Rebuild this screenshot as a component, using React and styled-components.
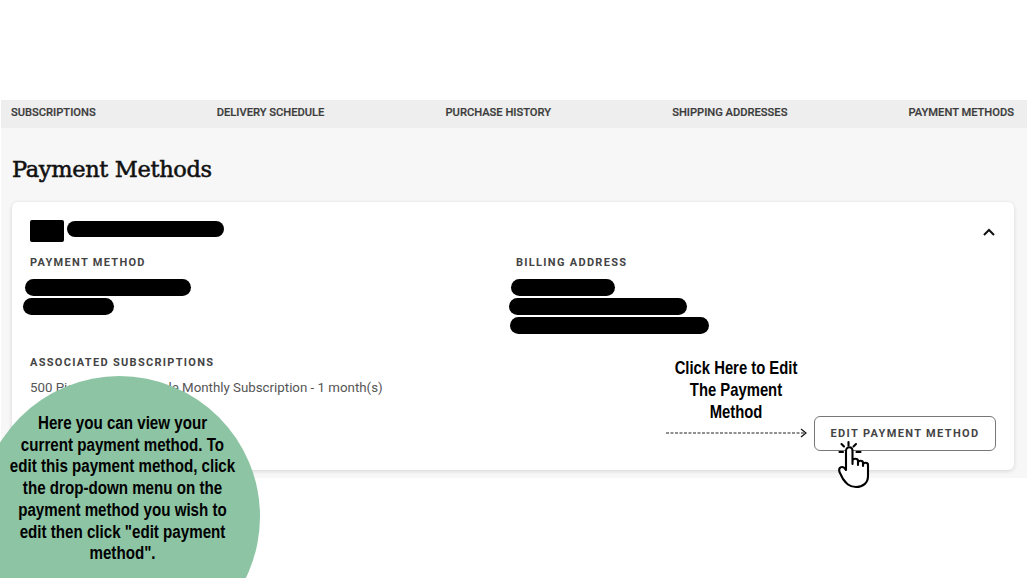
import React from 'react';
import styled, { createGlobalStyle } from 'styled-components';

const GlobalStyle = createGlobalStyle`
  html, body {
    margin: 0;
    padding: 0;
    background: #fff;
    overflow: hidden;
  }
  * {
    box-sizing: border-box;
  }
`;

const Page = styled.div`
  position: relative;
  width: 1028px;
  height: 578px;
  padding: 100px 1px 0;
  overflow: hidden;
  font-family: Roboto, 'Liberation Sans', sans-serif;
`;

const Nav = styled.nav`
  display: flex;
  align-items: center;
  justify-content: space-between;
  height: 28px;
  padding: 0 13px 4px 10px;
  background: #eeeeee;
`;

const NavItem = styled.a`
  font-size: 11.15px;
  font-weight: 500;
  color: #3c3c3c;
  text-transform: uppercase;
  -webkit-text-stroke: 0.2px #3c3c3c;
`;

const Panel = styled.main`
  height: 350px;
  padding: 25px 13px 0 11px;
  background: #f7f7f7;
`;

const Title = styled.h1`
  margin: 0 0 17px;
  font-family: 'DejaVu Serif', 'Liberation Serif', serif;
  font-size: 22.5px;
  line-height: 32px;
  font-weight: 400;
  letter-spacing: -0.35px;
  color: #111;
  -webkit-text-stroke: 0.55px #111;
`;

const Card = styled.section`
  display: flex;
  flex-direction: column;
  height: 268px;
  padding: 18px 18px 19px 18px;
  background: #fff;
  border-radius: 6px;
  box-shadow: 0 1px 4px rgba(0, 0, 0, 0.14);
`;

const CardHeader = styled.header`
  display: flex;
  align-items: flex-start;
  height: 22px;
`;

const CardLogo = styled.div`
  width: 34px;
  height: 22px;
  background: #000;
  border-radius: 2px;
`;

const Chevron = styled.svg`
  width: 14px;
  height: 10px;
  margin: 7px 0 0 auto;
`;

const Columns = styled.div`
  display: grid;
  grid-template-columns: 486px 1fr;
  margin-top: 14px;
`;

const Label = styled.h3`
  margin: 0;
  font-size: 11px;
  line-height: 14px;
  font-weight: 700;
  letter-spacing: 1.3px;
  color: #444;
  text-transform: uppercase;
`;

const Redactions = styled.div`
  display: flex;
  flex-direction: column;
  gap: 2px;
  margin-top: 9px;
`;

const Redacted = styled.div`
  width: ${(p) => p.$width}px;
  height: ${(p) => p.$height || 17}px;
  margin-top: ${(p) => p.$top || 0}px;
  margin-left: ${(p) => p.$shift || 0}px;
  background: #000;
  border-radius: 9px;
`;

const CardBottom = styled.div`
  flex: 1;
  display: flex;
  align-items: flex-end;
  justify-content: space-between;
  margin-top: 22px;
`;

const SubscriptionBlock = styled.div`
  align-self: flex-start;
`;

const SubText = styled.p`
  margin: 9px 0 0;
  font-size: 13.3px;
  line-height: 18px;
  color: #555;
`;

const EditButton = styled.button`
  width: 182px;
  height: 35px;
  padding: 0;
  background: #fff;
  border: 1.5px solid #777;
  border-radius: 6px;
  font-family: inherit;
  font-size: 11px;
  font-weight: 700;
  letter-spacing: 1.35px;
  color: #444;
  text-transform: uppercase;
`;

const Bubble = styled.aside`
  position: absolute;
  left: -21px;
  top: 376px;
  width: 281px;
  height: 281px;
  padding-top: 37px;
  background: #8dc4a4;
  border-radius: 50%;
`;

// no handwriting face is installed, so a bold sans is squeezed to the same proportions
const HandText = styled.div`
  font-family: 'Liberation Sans', sans-serif;
  font-size: ${(p) => p.$size}px;
  line-height: ${(p) => p.$line}px;
  font-weight: 700;
  text-align: center;
  color: #000;
  white-space: nowrap;
  transform: translateX(${(p) => p.$nudge || 0}px) scaleX(${(p) => p.$squeeze});
`;

const ClickNote = styled.div`
  position: absolute;
  left: 636px;
  top: 357px;
  width: 200px;
`;

const Arrow = styled.svg`
  position: absolute;
  left: 665px;
  top: 427px;
  width: 143px;
  height: 12px;
`;

const Hand = styled.svg`
  position: absolute;
  left: 834px;
  top: 440px;
  width: 38px;
  height: 49px;
`;

const navItems = [
  'Subscriptions',
  'Delivery Schedule',
  'Purchase History',
  'Shipping Addresses',
  'Payment Methods',
];

export default function App() {
  return (
    <Page>
      <GlobalStyle />
      <Nav>
        {navItems.map((item) => (
          <NavItem key={item}>{item}</NavItem>
        ))}
      </Nav>
      <Panel>
        <Title>Payment Methods</Title>
        <Card>
          <CardHeader>
            <CardLogo />
            <Redacted $width={157} $height={16} $shift={3} $top={1} />
            <Chevron viewBox="0 0 14 10">
              <path d="M2 8 L7 3 L12 8" fill="none" stroke="#111" strokeWidth="2" />
            </Chevron>
          </CardHeader>
          <Columns>
            <div>
              <Label>Payment Method</Label>
              <Redactions>
                <Redacted $width={166} $shift={-5} />
                <Redacted $width={91} $shift={-7} />
              </Redactions>
            </div>
            <div>
              <Label>Billing Address</Label>
              <Redactions>
                <Redacted $width={104} $shift={-5} />
                <Redacted $width={178} $shift={-7} />
                <Redacted $width={199} $shift={-6} />
              </Redactions>
            </div>
          </Columns>
          <CardBottom>
            <SubscriptionBlock>
              <Label>Associated Subscriptions</Label>
              <SubText>500 Piece Puzzle Sample Monthly Subscription - 1 month(s)</SubText>
            </SubscriptionBlock>
            <EditButton>Edit Payment Method</EditButton>
          </CardBottom>
        </Card>
      </Panel>

      <Bubble>
        <HandText $size={17.5} $line={21.7} $squeeze={0.865} $nudge={3}>
          Here you can view your
          <br />
          current payment method. To
          <br />
          edit this payment method, click
          <br />
          the drop-down menu on the
          <br />
          payment method you wish to
          <br />
          edit then click "edit payment
          <br />
          method".
        </HandText>
      </Bubble>

      <ClickNote>
        <HandText $size={19} $line={22} $squeeze={0.78}>
          Click Here to Edit
          <br />
          The Payment
          <br />
          Method
        </HandText>
      </ClickNote>

      <Arrow viewBox="0 0 143 12">
        <path d="M1 6 H140" fill="none" stroke="#222" strokeWidth="1" strokeDasharray="3 1.5" />
        <path d="M136 2 L141 6 L136 10" fill="none" stroke="#111" strokeWidth="1.2" />
      </Arrow>

      <Hand viewBox="0 0 38 49">
        <g fill="none" stroke="#000" strokeWidth="2.1" strokeLinecap="round" strokeLinejoin="round">
          <path d="M14.5 2 V5.5 M7.5 4 L10 6.5 M22 4 L19.5 6.5 M5.5 12 H9 M22.5 12 H26.5" />
          <path
            fill="#fff"
            d="M12 30 V11 C12 6 18.5 6 18.5 11 V24 V21 C18.5 18 24 18 24 21 V25 V23 C24 20 29 20 29 23 V26 V25 C29 22 34 22 34 25 V36 C34 43 29 47 22 47 C15 47 12 43 9 39 L5.5 32 C4 27 8 26 10.5 28 Z"
          />
        </g>
      </Hand>
    </Page>
  );
}
